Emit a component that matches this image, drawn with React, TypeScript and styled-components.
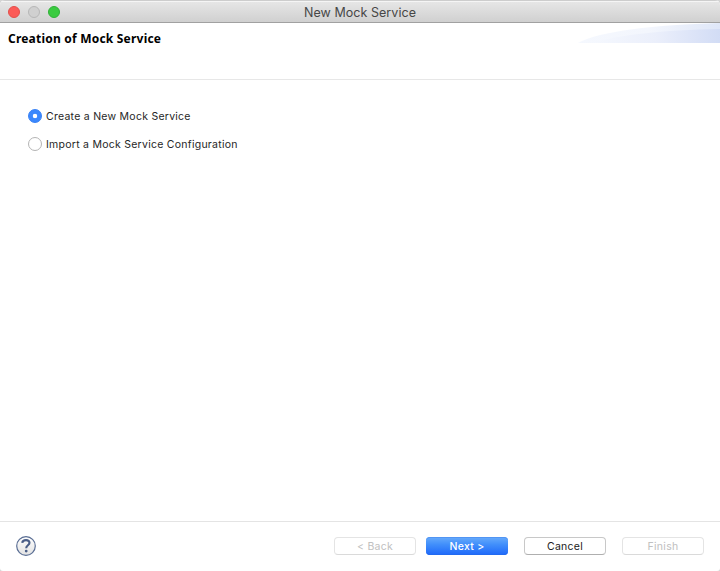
import React, { useState } from "react";
import styled, { createGlobalStyle, css } from "styled-components";

const GlobalStyle = createGlobalStyle`
  *, *::before, *::after { box-sizing: border-box; }
  html, body { margin: 0; background: #d4d4d4; }
`;

const Dialog = styled.div`
  display: flex;
  flex-direction: column;
  width: 720px;
  height: 571px;
  overflow: hidden;
  background: #fff;
  border-radius: 5px 5px 3px 3px;
  font-family: Inter, "Liberation Sans", sans-serif;
  font-size: 10.5px;
  color: #262626;
`;

const TitleBar = styled.header`
  display: grid;
  grid-template-columns: 100px 1fr 100px;
  align-items: center;
  flex: none;
  height: 23px;
  padding: 0 8px;
  border-top: 1px solid #cdcdcd;
  border-bottom: 1px solid #a1a1a1;
  background: linear-gradient(#f5f5f5 0, #f5f5f5 1px, #e6e6e6 1px, #d0d0d0 100%);
`;

const Lights = styled.div`
  display: flex;
  gap: 8px;
`;

const Light = styled.span<{ $fill: string; $edge: string }>`
  width: 12px;
  height: 12px;
  border-radius: 50%;
  border: 1px solid ${(p) => p.$edge};
  background: ${(p) => p.$fill};
`;

const Title = styled.h1`
  margin: 0;
  padding-top: 3px;
  text-align: center;
  font-size: 12.5px;
  line-height: 18px;
  font-weight: 400;
  letter-spacing: 0.05px;
  color: #474747;
`;

const Banner = styled.section`
  display: flex;
  justify-content: space-between;
  align-items: flex-start;
  flex: none;
  height: 57px;
  padding-left: 8px;
  border-bottom: 1px solid #e7e7e7;
`;

const Heading = styled.h2`
  margin: 7px 0 0;
  font: 700 12px/17px "Noto Sans", "Open Sans", sans-serif;
  letter-spacing: 0.21px;
  white-space: nowrap;
  color: #000;
`;

const Swoosh = styled.svg`
  display: block;
  width: 142px;
  height: 20px;
`;

const Content = styled.main`
  flex: 1;
  display: flex;
  flex-direction: column;
  align-items: flex-start;
  gap: 14px;
  padding: 29px 28px;
`;

const Option = styled.label`
  display: flex;
  align-items: center;
  gap: 4px;
  height: 14px;
  line-height: 14px;
  white-space: nowrap;
`;

const OptionText = styled.span`
  padding-top: 2px;
  letter-spacing: 0.26px;
`;

const Radio = styled.input`
  appearance: none;
  width: 14px;
  height: 14px;
  margin: 0;
  border-radius: 50%;
  border: 1px solid #b4b4b4;
  background: #fff;
  &:checked {
    border-color: #3480f6;
    background: radial-gradient(circle, #fff 0 1.9px, #3b88fd 2.6px);
  }
`;

const Footer = styled.footer`
  display: flex;
  align-items: center;
  flex: none;
  height: 50px;
  padding: 0 16px 1px;
  border-top: 1px solid #e4e4e4;
`;

const HelpButton = styled.button`
  display: block;
  width: 20px;
  height: 20px;
  margin: 0 auto 0 0;
  padding: 0;
  border: 0;
  background: none;
  svg { display: block; }
`;

const Actions = styled.div`
  display: flex;
  gap: 16px;
`;

const Pair = styled.div`
  display: flex;
  gap: 10px;
`;

const PushButton = styled.button<{ $primary?: boolean }>`
  width: 82px;
  height: 18px;
  padding: 2px 0 0;
  border: 1px solid #c8c8c8;
  border-bottom-color: #afafaf;
  border-radius: 4px;
  background: #fff;
  font: 400 10.5px/14px Inter, "Liberation Sans", sans-serif;
  letter-spacing: 0.28px;
  color: #202020;
  &:disabled {
    border-color: #e4e4e4;
    border-bottom-color: #dadada;
    color: #c0c0c0;
  }
  ${(p) =>
    p.$primary &&
    css`
      border: 0;
      background: linear-gradient(#68abfb, #4290fb 40%, #1e68fa);
      box-shadow: inset 0 1px #5295f3, inset 0 -1px #226af0;
      font-weight: 500;
      color: #fff;
    `}
`;

const choices = [
  { id: "new", label: "Create a New Mock Service" },
  { id: "import", label: "Import a Mock Service Configuration" },
];

export default function App() {
  const [choice, setChoice] = useState("new");
  return (
    <>
      <GlobalStyle />
      <Dialog>
        <TitleBar>
          <Lights>
            <Light $fill="#fc5b57" $edge="#e2504b" />
            <Light $fill="#d0d0d0" $edge="#b7b7b7" />
            <Light $fill="#3acb40" $edge="#2fb137" />
          </Lights>
          <Title>New Mock Service</Title>
        </TitleBar>
        <Banner>
          <Heading>Creation of Mock Service</Heading>
          <Swoosh viewBox="0 0 142 20" aria-hidden="true">
            <defs>
              <linearGradient id="outer" x1="0" x2="1" y1="0" y2="0">
                <stop offset="0" stopColor="#f5f8fe" />
                <stop offset="0.5" stopColor="#f3f6fd" />
                <stop offset="1" stopColor="#dfe7f8" />
              </linearGradient>
              <linearGradient id="inner" x1="0" x2="1" y1="0" y2="0">
                <stop offset="0" stopColor="#f5f8fe" />
                <stop offset="0.5" stopColor="#ebeffb" />
                <stop offset="1" stopColor="#d2dcf5" />
              </linearGradient>
            </defs>
            <path d="M0 20C22 8 76 2 142 0V20Z" fill="url(#outer)" />
            <path d="M14 20C40 12 84 7 142 6V20Z" fill="url(#inner)" />
          </Swoosh>
        </Banner>
        <Content>
          {choices.map((c) => (
            <Option key={c.id}>
              <Radio
                type="radio"
                name="source"
                checked={choice === c.id}
                onChange={() => setChoice(c.id)}
              />
              <OptionText>{c.label}</OptionText>
            </Option>
          ))}
        </Content>
        <Footer>
          <HelpButton aria-label="Help">
            <svg width="20" height="20" viewBox="0 0 20 20" fill="none">
              <defs>
                <linearGradient id="help" x1="0" x2="0" y1="0" y2="1">
                  <stop offset="0" stopColor="#fff" />
                  <stop offset="1" stopColor="#e2e2e2" />
                </linearGradient>
              </defs>
              <circle cx="10" cy="10" r="9.3" fill="url(#help)" stroke="#5a6e94" strokeWidth="1.2" />
              <path
                d="M6.2 6.9C6.5 4.8 7.9 4.1 10 4.1C12.3 4.1 13.5 5.1 13.5 6.8C13.5 9.3 10.2 9.3 10.2 12.2"
                stroke="#4a5e87"
                strokeWidth="2.1"
              />
              <circle cx="10.2" cy="15.1" r="1.4" fill="#4a5e87" />
            </svg>
          </HelpButton>
          <Actions>
            <Pair>
              <PushButton disabled>&lt; Back</PushButton>
              <PushButton $primary>Next &gt;</PushButton>
            </Pair>
            <PushButton>Cancel</PushButton>
            <PushButton disabled>Finish</PushButton>
          </Actions>
        </Footer>
      </Dialog>
    </>
  );
}
